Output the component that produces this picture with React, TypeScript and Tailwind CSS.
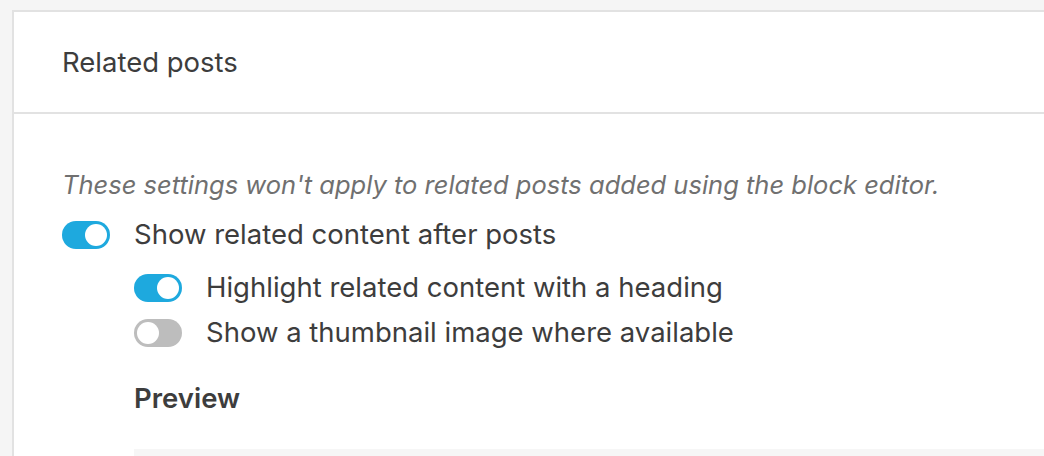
import { useState } from "react";

function Toggle({ on, onChange }: { on: boolean; onChange: () => void }) {
  return (
    <button
      onClick={onChange}
      className={`relative h-[28px] w-[48px] shrink-0 rounded-full transition-colors ${
        on ? "bg-[#1ea9de]" : "bg-[#bdbdbd]"
      }`}
    >
      <span
        className={`absolute top-[3px] h-[22px] w-[22px] rounded-full bg-white transition-all ${
          on ? "left-[23px]" : "left-[3px]"
        }`}
      />
    </button>
  );
}

export default function App() {
  const [showRelated, setShowRelated] = useState(true);
  const [heading, setHeading] = useState(true);
  const [thumbnail, setThumbnail] = useState(false);

  return (
    <div
      className="h-[456px] overflow-hidden bg-[#f5f5f5] pl-[12px] pt-[10px]"
      style={{ fontFamily: "Inter, 'Noto Sans', sans-serif" }}
    >
      <div className="h-full border-l-2 border-t-2 border-[#e2e2e2] bg-white">
        <div className="flex h-[102px] items-center border-b-2 border-[#e2e2e2] pl-[48px]">
          <h2 className="text-[27.5px] leading-[36px] text-[#3d3d3d]">Related posts</h2>
        </div>

        <div className="pl-[48px] pt-[55px]">
          <p className="text-[25.5px] leading-[32px] italic text-[#707070]">
            These settings won't apply to related posts added using the block editor.
          </p>

          <label className="mt-[16px] flex h-[36px] items-center gap-[24px] text-[27.5px] text-[#3d3d3d]">
            <Toggle on={showRelated} onChange={() => setShowRelated(!showRelated)} />
            Show related content after posts
          </label>

          <div className="pl-[72px]">
            <label className="mt-[17px] flex h-[36px] items-center gap-[24px] text-[27.5px] text-[#3d3d3d]">
              <Toggle on={heading} onChange={() => setHeading(!heading)} />
              Highlight related content with a heading
            </label>
            <label className="mt-[9px] flex h-[36px] items-center gap-[24px] text-[27.5px] text-[#3d3d3d]">
              <Toggle on={thumbnail} onChange={() => setThumbnail(!thumbnail)} />
              Show a thumbnail image where available
            </label>

            <h3 className="mt-[29px] text-[27.5px] leading-[36px] font-semibold text-[#3d3d3d]">
              Preview
            </h3>
            <div className="mt-[33px] h-[60px] bg-[#f6f6f6]" />
          </div>
        </div>
      </div>
    </div>
  );
}
